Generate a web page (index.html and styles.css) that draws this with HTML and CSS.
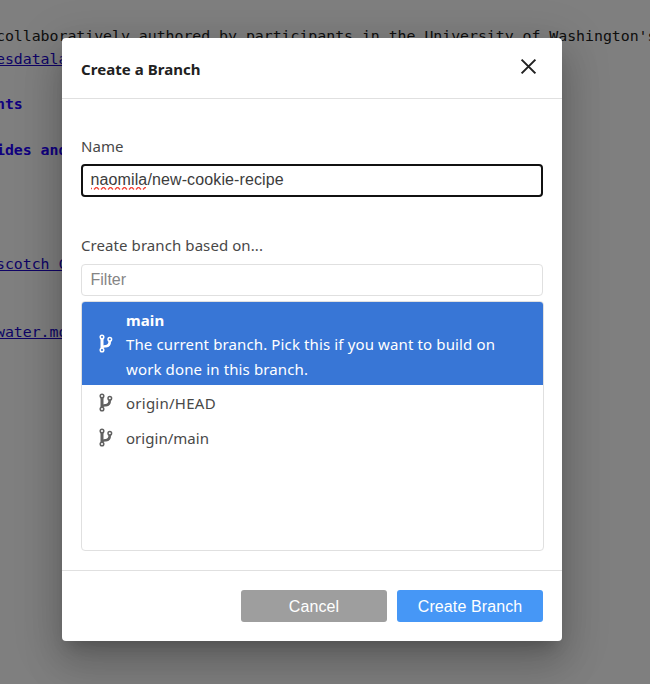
FILE: index.html
```html
<!DOCTYPE html>
<html lang="en">
<head>
<meta charset="utf-8">
<title>Create a Branch</title>
<link rel="stylesheet" href="styles.css">
</head>
<body>
<svg width="0" height="0" class="defs" aria-hidden="true">
  <symbol id="branch" viewBox="0 0 14 19">
    <g fill="none" stroke="currentColor">
      <path d="M3 4.8v9.4" stroke-width="3"/>
      <path d="M10.8 7c0 3.8-1.6 5-3.8 5.2-1.8.2-3 .2-4 .9" stroke-width="2.6"/>
      <circle cx="3" cy="3" r="1.8" stroke-width="1.5"/>
      <circle cx="3" cy="16" r="1.8" stroke-width="1.5"/>
      <circle cx="10.8" cy="5.2" r="1.8" stroke-width="1.5"/>
    </g>
  </symbol>
</svg>
<pre class="editor"><span class="row">collaboratively authored by participants in the University of Washington's</span>
<span class="row link">esdatalab</span>
<span class="row blank"></span>
<span class="row heading">nts</span>
<span class="row"></span>
<span class="row heading">ides and</span>
<span class="row gap"></span>
<span class="row link">scotch C</span>
<span class="row gap-small"></span>
<span class="row link">water.mo</span></pre>
<div class="backdrop">
  <section class="dialog">
    <header class="dialog-header">
      <h1>Create a Branch</h1>
      <svg class="close" viewBox="0 0 16 16"><path d="M1.5 1.5l13 13M14.5 1.5l-13 13" fill="none" stroke="currentColor" stroke-width="1.9"/></svg>
    </header>
    <div class="dialog-body">
      <p class="label name-label">Name</p>
      <div class="input name"><span class="misspelled">naomila<svg class="squiggle" viewBox="0 0 55 3"><path d="M0 1.5h1M3 2.5l2-2h1l2 2M10 2.5l2-2h1l2 2M17 2.5l2-2h1l2 2M24 2.5l2-2h1l2 2M31 2.5l2-2h1l2 2M38 2.5l2-2h1l2 2M45 2.5l2-2h1l2 2M52 2.5l2-2h1" fill="none" stroke="currentColor" stroke-width="1.3"/></svg></span>/new-cookie-recipe</div>
      <p class="label base-label">Create branch based on...</p>
      <div class="input filter">Filter</div>
      <div class="branches">
        <div class="branch selected">
          <svg class="icon"><use href="#branch"/></svg>
          <div class="details"><strong>main</strong><br>The current branch. Pick this if you want to build on<br>work done in this branch.</div>
        </div>
        <div class="branch"><svg class="icon"><use href="#branch"/></svg><span class="head-name">origin/HEAD</span></div>
        <div class="branch"><svg class="icon"><use href="#branch"/></svg><span class="main-name">origin/main</span></div>
      </div>
    </div>
    <footer class="dialog-footer">
      <div class="button cancel">Cancel</div>
      <div class="button create">Create Branch</div>
    </footer>
  </section>
</div>
</body>
</html>
```
FILE: styles.css
```css
* { box-sizing: border-box; }
body {
  margin: 0;
  width: 650px;
  height: 684px;
  overflow: hidden;
  position: relative;
  background: #fff;
  font-family: "Open Sans", "Noto Sans", sans-serif;
  color: #212121;
}
.defs { position: absolute; }
.editor {
  margin: 0;
  padding-top: 25px;
  height: 684px;
  overflow: hidden;
  display: flex;
  flex-direction: column;
  font: 14.9px/23px "DejaVu Sans Mono", monospace;
  letter-spacing: -0.04px;
  color: #212121;
}
.row { display: block; min-height: 23px; white-space: pre; margin-left: -4px; }
.row.blank { min-height: 22px; }
.link { color: #2008cc; text-decoration: underline; }
.heading { color: #2200ff; font-weight: bold; }
.gap { min-height: 91px; }
.gap-small { min-height: 45px; }
.backdrop {
  position: absolute;
  inset: 0;
  padding: 38px 0 0 62px;
  background: rgba(0, 0, 0, .5);
}
.dialog {
  width: 500px;
  height: 603px;
  display: flex;
  flex-direction: column;
  background: #fff;
  border-radius: 4px;
  box-shadow: 0 11px 15px -7px rgba(0,0,0,.2), 0 24px 38px 3px rgba(0,0,0,.14), 0 9px 46px 8px rgba(0,0,0,.12);
}
.dialog-header {
  height: 61px;
  flex: none;
  display: flex;
  justify-content: space-between;
  padding: 20px 25px 0 19px;
  border-bottom: 1px solid #e0e0e0;
}
h1 { margin: 0; font: bold 15px/22px "Noto Sans", sans-serif; letter-spacing: 0.05px; }
.close { width: 17px; height: 17px; }
.dialog-body { padding: 35px 18px 0 19px; height: 471px; }
.label { margin: 0; font: 15px/24px "Noto Sans", sans-serif; color: #484848; letter-spacing: 0.08px; }
.input {
  width: 462px;
  border: 1px solid #e0e0e0;
  border-radius: 4px;
  padding-left: 9px;
  font: 16px/30px "Liberation Sans", sans-serif;
  color: #3c3c3c;
}
.name { height: 33px; margin-top: 6px; border: 2px solid #111; padding-left: 7.5px; line-height: 28px; letter-spacing: 0.12px; }
.base-label { margin-top: 36px; }
.filter { height: 32px; margin-top: 7px; color: #858585; padding-left: 8.5px; }
.misspelled { position: relative; }
.squiggle { position: absolute; left: 0; bottom: -2px; width: 55px; height: 3px; color: #f44336; overflow: hidden; }
.branches {
  width: 463px;
  height: 250px;
  margin-top: 5px;
  border: 1px solid #e0e0e0;
  border-radius: 4px;
  overflow: hidden;
}
.branch {
  height: 35px;
  display: flex;
  align-items: center;
  padding-left: 17px;
  gap: 13px;
  font: 15px/24px "Noto Sans", sans-serif;
  color: #484848;
}
.icon { width: 14px; height: 19px; flex: none; color: #616161; margin-bottom: 1px; }
.head-name { letter-spacing: 0.25px; }
.main-name { letter-spacing: 0.03px; }
.selected { height: 83px; background: #3876d6; color: #fff; }
.selected .icon { color: #fff; }
.details { padding-top: 2px; font: 15px/24.5px "Noto Sans", sans-serif; white-space: nowrap; letter-spacing: 0.13px; }
.dialog-footer {
  height: 71px;
  display: flex;
  justify-content: flex-end;
  gap: 10px;
  padding: 19px 19px 0;
  border-top: 1px solid #e0e0e0;
}
.button {
  width: 146px;
  height: 32px;
  border-radius: 3px;
  text-align: center;
  font: 16px/33px "Liberation Sans", sans-serif;
  letter-spacing: 0.1px;
  color: #fff;
}
.cancel { background: #9e9e9e; }
.create { background: #4697f6; }
```
